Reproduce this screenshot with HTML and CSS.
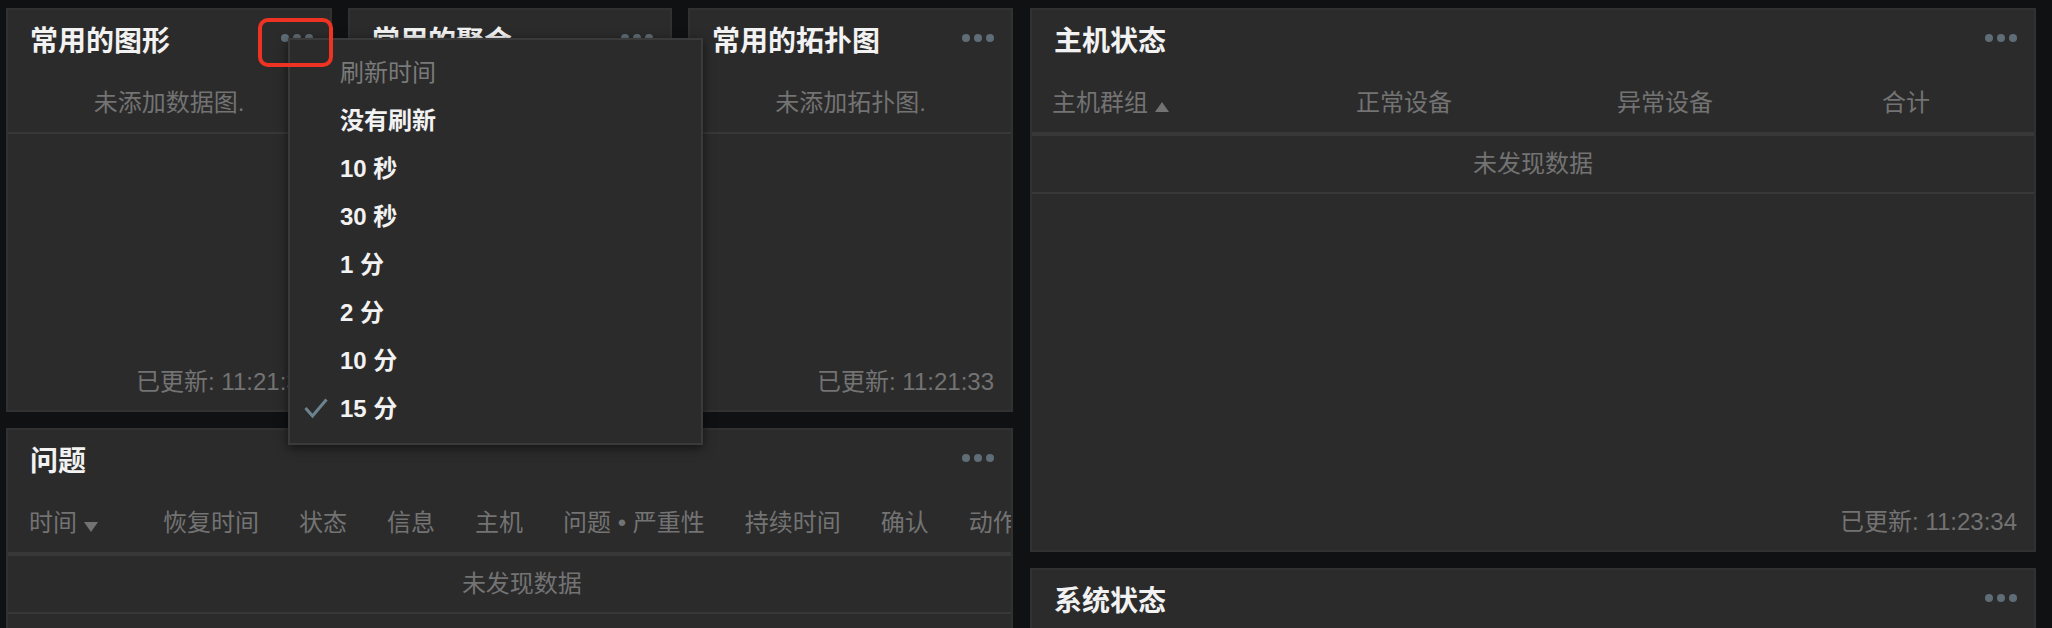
FILE: index.html
```html
<!DOCTYPE html>
<html lang="zh-CN">
<head>
<meta charset="utf-8">
<title>仪表板</title>
<link rel="stylesheet" href="styles.css">
</head>
<body>
<div class="dash">
  <div class="col-left">
    <div class="row-top">
      <section class="widget widget-small">
        <header class="w-head"><h4 class="w-title">常用的图形</h4><span class="dots"><i></i><i></i><i></i></span></header>
        <div class="w-body"><div class="nodata">未添加数据图.</div></div>
        <footer class="w-foot">已更新: 11:21:33</footer>
      </section>
      <section class="widget widget-small">
        <header class="w-head"><h4 class="w-title">常用的聚合</h4><span class="dots"><i></i><i></i><i></i></span></header>
        <div class="w-body"><div class="nodata">未添加聚合图形.</div></div>
        <footer class="w-foot">已更新: 11:21:33</footer>
      </section>
      <section class="widget widget-small">
        <header class="w-head"><h4 class="w-title">常用的拓扑图</h4><span class="dots"><i></i><i></i><i></i></span></header>
        <div class="w-body"><div class="nodata">未添加拓扑图.</div></div>
        <footer class="w-foot">已更新: 11:21:33</footer>
      </section>
    </div>
    <section class="widget widget-problems">
      <header class="w-head"><h4 class="w-title">问题</h4><span class="dots"><i></i><i></i><i></i></span></header>
      <div class="w-body clip">
        <table class="tbl tbl-problems">
          <thead>
            <tr>
              <th class="th-time">时间<span class="arrow-down"></span></th>
              <th>恢复时间</th>
              <th>状态</th>
              <th>信息</th>
              <th>主机</th>
              <th>问题 • 严重性</th>
              <th>持续时间</th>
              <th>确认</th>
              <th>动作</th>
            </tr>
          </thead>
          <tbody>
            <tr><td colspan="9" class="td-empty">未发现数据</td></tr>
          </tbody>
        </table>
      </div>
    </section>
  </div>
  <div class="col-right">
    <section class="widget widget-hosts">
      <header class="w-head"><h4 class="w-title">主机状态</h4><span class="dots"><i></i><i></i><i></i></span></header>
      <div class="w-body">
        <table class="tbl tbl-hosts">
          <colgroup><col class="c1"><col class="c2"><col class="c3"><col></colgroup>
          <thead>
            <tr>
              <th>主机群组<span class="arrow-up"></span></th>
              <th>正常设备</th>
              <th>异常设备</th>
              <th>合计</th>
            </tr>
          </thead>
          <tbody>
            <tr><td colspan="4" class="td-empty">未发现数据</td></tr>
          </tbody>
        </table>
      </div>
      <footer class="w-foot">已更新: 11:23:34</footer>
    </section>
    <section class="widget widget-system">
      <header class="w-head"><h4 class="w-title">系统状态</h4><span class="dots"><i></i><i></i><i></i></span></header>
      <div class="w-body"></div>
    </section>
  </div>
</div>

<div class="menu">
  <div class="menu-head">刷新时间</div>
  <div class="menu-item">没有刷新</div>
  <div class="menu-item">10 秒</div>
  <div class="menu-item">30 秒</div>
  <div class="menu-item">1 分</div>
  <div class="menu-item">2 分</div>
  <div class="menu-item">10 分</div>
  <div class="menu-item selected"><svg class="check" width="24" height="20" viewBox="0 0 24 20"><polyline points="1.5,10 8.5,18 22.5,1.5" fill="none" stroke="#6c838f" stroke-width="3"/></svg>15 分</div>
</div>
<div class="highlight"></div>
</body>
</html>
```

FILE: styles.css
```css
* { box-sizing: border-box; }
html, body {
  margin: 0;
  padding: 0;
  width: 2052px;
  height: 628px;
  overflow: hidden;
  background: #101113;
  font-family: "Liberation Sans", "Noto Sans CJK SC", sans-serif;
  font-size: 24px;
  color: #737373;
}
body { position: relative; }

.dash {
  display: flex;
  gap: 17px;
  padding: 8px 0 0 6px;
}
.col-left {
  width: 1007px;
  display: flex;
  flex-direction: column;
  gap: 16px;
}
.col-right {
  width: 1006px;
  display: flex;
  flex-direction: column;
  gap: 16px;
}
.row-top {
  display: flex;
  gap: 16px;
}

.widget {
  background: #2b2b2b;
  border: 2px solid #313131;
  display: flex;
  flex-direction: column;
}
.widget-small { width: 326px; height: 404px; }
.widget-small:nth-child(2) { width: 324px; }
.widget-small:nth-child(3) { width: 325px; }
.widget-problems { height: 420px; }
.widget-hosts { height: 544px; }
.widget-system { height: 300px; }

.w-head {
  height: 64px;
  display: flex;
  align-items: center;
  justify-content: space-between;
  padding: 0 17px 0 22px;
  flex-shrink: 0;
}
.w-title {
  margin: 0;
  font-size: 28px;
  font-weight: bold;
  color: #f2f2f2;
  line-height: 64px;
  white-space: nowrap;
}
.dots {
  display: flex;
  gap: 4px;
  margin-top: -8px;
}
.dots i {
  display: block;
  width: 8px;
  height: 8px;
  border-radius: 50%;
  background: #5f6d76;
}

.w-body {
  flex: 1;
  min-height: 0;
}
.clip { overflow: hidden; }

.nodata {
  line-height: 58px;
  text-align: center;
  border-bottom: 2px solid #383838;
  white-space: nowrap;
}

.w-foot {
  height: 56px;
  line-height: 56px;
  text-align: right;
  padding-right: 17px;
  white-space: nowrap;
  flex-shrink: 0;
}

.tbl {
  border-collapse: separate;
  border-spacing: 0;
}
.tbl th {
  font-weight: normal;
  text-align: left;
  white-space: nowrap;
  line-height: 58px;
  padding: 0 19px 0 21px;
  border-bottom: 4px solid #383838;
  color: #737373;
}
.tbl td {
  line-height: 56px;
  padding: 0;
  border-bottom: 2px solid #383838;
}
.td-empty { text-align: center; }

.tbl-problems { width: max-content; }
.tbl-problems .th-time { width: 134px; min-width: 134px; }

.tbl-hosts {
  width: 100%;
  table-layout: fixed;
}
.tbl-hosts th { padding: 0 0 0 20px; }
.tbl-hosts .c1 { width: 304px; }
.tbl-hosts .c2 { width: 261px; }
.tbl-hosts .c3 { width: 265px; }

.arrow-down,
.arrow-up {
  display: inline-block;
  width: 0;
  height: 0;
  margin-left: 7px;
  border-left: 7px solid transparent;
  border-right: 7px solid transparent;
}
.arrow-down {
  border-top: 10px solid #737373;
  vertical-align: -1px;
}
.arrow-up {
  border-bottom: 10px solid #737373;
  vertical-align: -1px;
}

.menu {
  position: absolute;
  left: 288px;
  top: 38px;
  width: 415px;
  height: 407px;
  background: #2b2b2b;
  border: 2px solid #3a3a3a;
  box-shadow: 0 3px 10px rgba(0, 0, 0, 0.55);
  padding: 9px 0 0 50px;
  z-index: 10;
}
.menu-head {
  line-height: 48px;
  color: #7a7a7a;
}
.menu-item {
  position: relative;
  line-height: 48px;
  color: #f2f2f2;
  font-weight: 600;
}
.check {
  position: absolute;
  left: -36px;
  top: 13px;
}

.highlight {
  position: absolute;
  left: 258px;
  top: 18px;
  width: 75px;
  height: 49px;
  border: 4px solid #ee3322;
  border-radius: 10px;
  z-index: 20;
}
```
